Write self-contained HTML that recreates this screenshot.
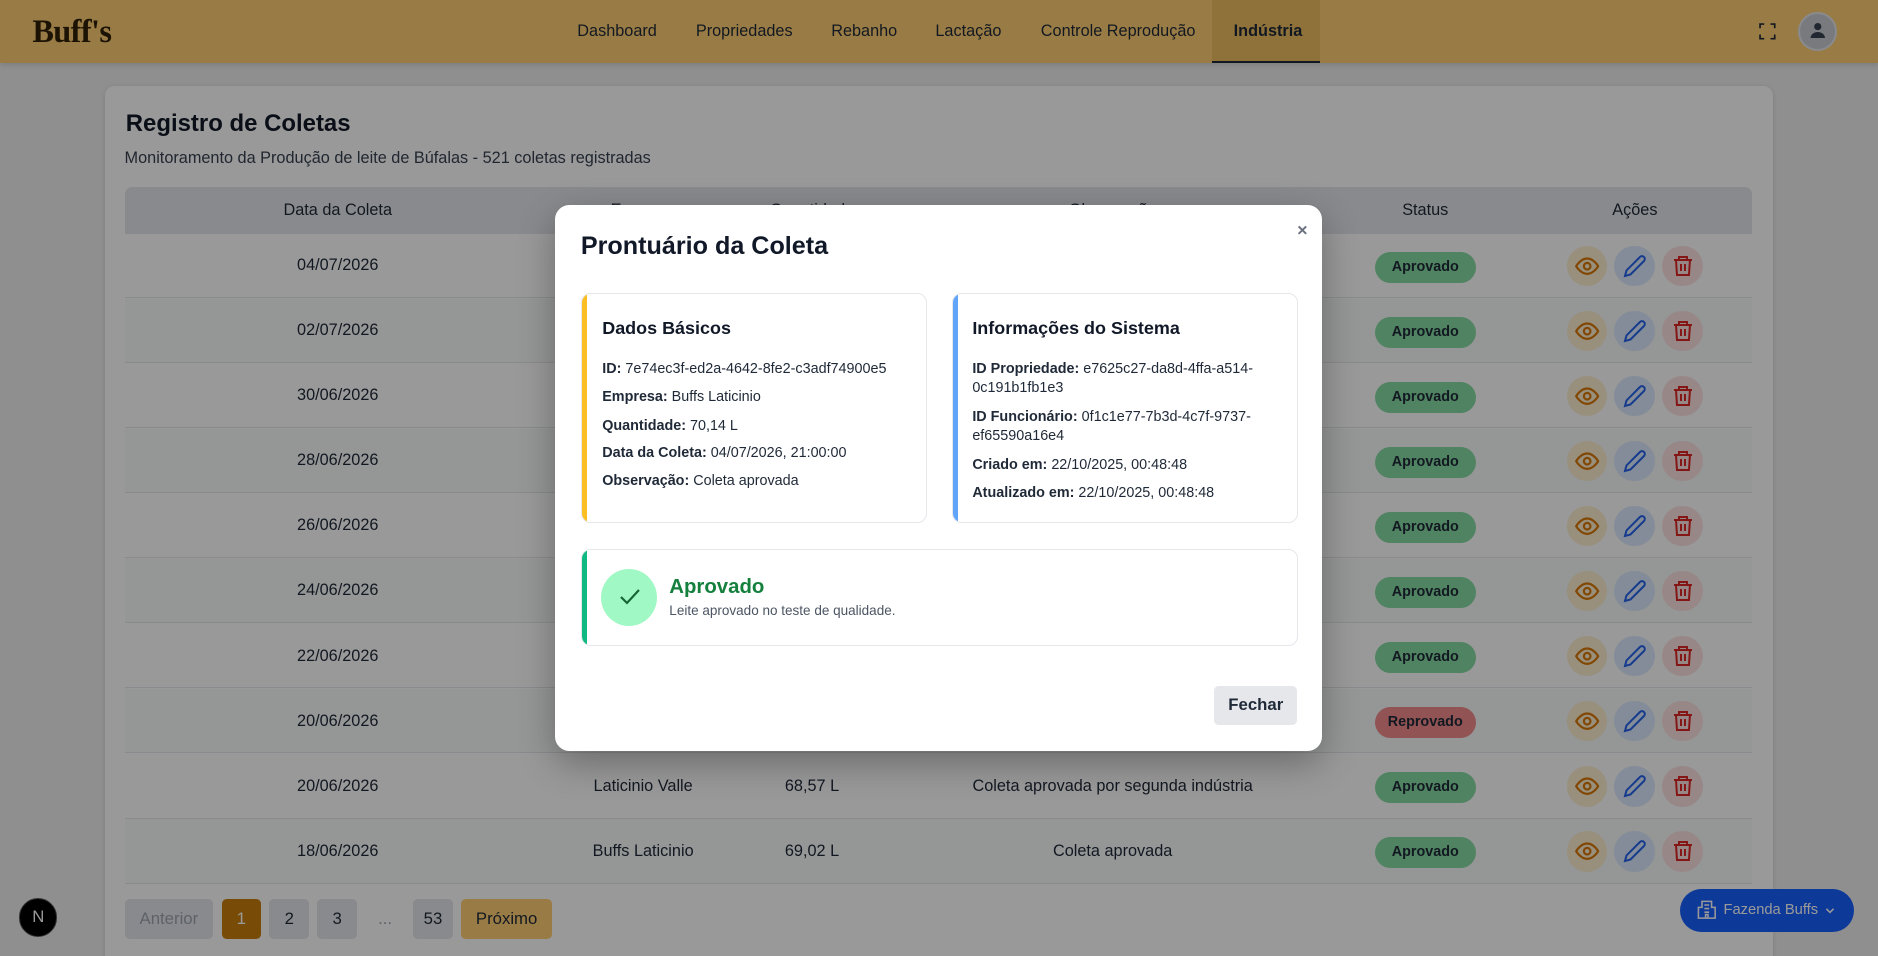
<!DOCTYPE html>
<html><head><meta charset="utf-8">
<style>
*{box-sizing:border-box;margin:0;padding:0}
html,body{width:1878px;height:956px;overflow:hidden;background:#eeeeef}
#w{zoom:1.19770;width:1568px;height:798px;position:relative;font-family:"Liberation Sans",sans-serif;color:#1f2937;overflow:hidden}
.a{position:absolute}
.hdr{left:0;top:0;width:1568px;height:53px;background:#ffcf73;box-shadow:0 2px 4px rgba(0,0,0,.12)}
.nav{font-size:13.6px;color:#1f2937;top:18px}
.card{left:88px;top:72px;width:1392px;height:760px;background:#fff;border-radius:8px;box-shadow:0 1px 4px rgba(0,0,0,.12)}
.th{left:104px;top:156px;width:1359px;height:39px;background:#e5e7eb;border-radius:6px 6px 0 0}
.c{position:absolute;transform:translateX(-50%);font-size:13.6px;white-space:nowrap;color:#1f2937}
.row{position:absolute;left:104px;width:1359px;height:54px;border-bottom:1px solid #e5e7eb}
.pill{position:absolute;left:1044px;width:84px;height:26px;border-radius:13px;background:#86dba2;font-size:12px;font-weight:bold;text-align:center;line-height:26px;color:#1f2937}
.pill.r{background:#f28b8b}
.ic{position:absolute;width:34px;height:34px;border-radius:50%;display:flex;align-items:center;justify-content:center}
.pg{position:absolute;top:751px;height:33px;border-radius:4px;background:#e5e7eb;font-size:14px;text-align:center;line-height:33px;color:#1f2937}
.ov{left:0;top:0;width:1568px;height:798px;background:rgba(0,0,0,.4)}
.modal{left:463px;top:171px;width:641px;height:456px;background:#fff;border-radius:12px;box-shadow:0 10px 30px rgba(0,0,0,.3)}
.box{position:absolute;border:1px solid #e5e7eb;border-radius:8px;background:#fff;overflow:hidden}
.box:before{content:"";position:absolute;left:0;top:0;bottom:0;width:4px}
.b1:before{background:#fbbf24}.b2:before{background:#60a5fa}.b3:before{background:#10b981}
.h{position:absolute;font-size:15px;font-weight:bold;color:#111827}
.ln{position:absolute;font-size:12px;color:#1f2937;line-height:16px}
.ln b{font-weight:bold}
</style></head><body><div id="w">
<div class="a hdr"></div>
<div class="a" style="left:27px;top:11px;font-family:'Liberation Serif',serif;font-weight:bold;font-size:27px;color:#2f2107;letter-spacing:-0.5px">Buff's</div>
<div class="a" style="left:1012px;top:0;width:90px;height:53px;background:#edbf62;border-bottom:2px solid #1f2937"></div>
<div class="a nav" style="left:482px">Dashboard</div>
<div class="a nav" style="left:581px">Propriedades</div>
<div class="a nav" style="left:694px">Rebanho</div>
<div class="a nav" style="left:781px">Lactação</div>
<div class="a nav" style="left:869px">Controle Reprodução</div>
<div class="a nav" style="left:1030px;font-weight:bold">Indústria</div>
<svg class="a" style="left:1469px;top:19px" width="14" height="14" viewBox="0 0 16 16" fill="none" stroke="#1f2937" stroke-width="1.6"><path d="M1 5V1h4M11 1h4v4M15 11v4h-4M5 15H1v-4"/></svg>
<div class="a" style="left:1501px;top:10px;width:33px;height:33px;border-radius:50%;background:#c9ccd2;border:2px solid #e5e7eb"></div>
<svg class="a" style="left:1509px;top:17px" width="18" height="18" viewBox="0 0 18 18" fill="#374151"><circle cx="9" cy="5.5" r="3"/><path d="M3 15a6 5 0 0 1 12 0z"/></svg>

<div class="a card"></div>
<div class="a" style="left:105px;top:92px;font-size:20px;font-weight:bold;color:#111827">Registro de Coletas</div>
<div class="a" style="left:104px;top:124px;font-size:13.6px;color:#374151">Monitoramento da Produção de leite de Búfalas - 521 coletas registradas</div>
<div class="a th"></div>
<div class="c" style="left:282px;top:168px">Data da Coleta</div>
<div class="c" style="left:537px;top:168px">Empresa</div>
<div class="c" style="left:678px;top:168px">Quantidade</div>
<div class="c" style="left:929px;top:168px">Observação</div>
<div class="c" style="left:1190px;top:168px">Status</div>
<div class="c" style="left:1365px;top:168px">Ações</div>

<div id="rows"></div>
<script>
var d=[["04/07/2026","Buffs Laticinio","70,14 L","Coleta aprovada",0],["02/07/2026","Buffs Laticinio","70,00 L","Coleta aprovada",0],["30/06/2026","Buffs Laticinio","69,80 L","Coleta aprovada",0],["28/06/2026","Buffs Laticinio","69,50 L","Coleta aprovada",0],["26/06/2026","Buffs Laticinio","69,40 L","Coleta aprovada",0],["24/06/2026","Buffs Laticinio","69,30 L","Coleta aprovada",0],["22/06/2026","Buffs Laticinio","69,20 L","Coleta aprovada",0],["20/06/2026","Buffs Laticinio","69,10 L","Coleta reprovada",1],["20/06/2026","Laticinio Valle","68,57 L","Coleta aprovada por segunda indústria",0],["18/06/2026","Buffs Laticinio","69,02 L","Coleta aprovada",0]];
var h="";
for(var i=0;i<10;i++){var t=195+i*54.3,r=d[i];
h+='<div class="row" style="top:'+t+'px;background:'+(i%2?'#f9fafb':'#fff')+'">'+
'<div class="c" style="left:178px;top:19px">'+r[0]+'</div>'+
'<div class="c" style="left:433px;top:19px">'+r[1]+'</div>'+
'<div class="c" style="left:574px;top:19px">'+r[2]+'</div>'+
'<div class="c" style="left:825px;top:19px">'+r[3]+'</div>'+
'<div class="pill'+(r[4]?' r':'')+'" style="top:15px">'+(r[4]?'Reprovado':'Aprovado')+'</div>'+
'<div class="ic" style="left:1204px;top:10px;background:#fdf0cf"><svg width="22" height="22" viewBox="0 0 24 24" fill="none" stroke="#d97706" stroke-width="2"><path d="M2 12s4-7 10-7 10 7 10 7-4 7-10 7S2 12 2 12z"/><circle cx="12" cy="12" r="3"/></svg></div>'+
'<div class="ic" style="left:1244px;top:10px;background:#dbeafe"><svg width="20" height="20" viewBox="0 0 24 24" fill="none" stroke="#2563eb" stroke-width="2"><path d="M17 3a2.8 2.8 0 0 1 4 4L7.5 20.5 2 22l1.5-5.5z"/></svg></div>'+
'<div class="ic" style="left:1284px;top:10px;background:#fee2e2"><svg width="20" height="20" viewBox="0 0 24 24" fill="none" stroke="#dc2626" stroke-width="2"><path d="M3 6h18M8 6V3h8v3M5 6l1 15h12l1-15M10 10v7M14 10v7"/></svg></div>'+
'</div>';}
document.getElementById("rows").innerHTML=h;
</script>
<div class="pg" style="left:104px;width:74px;color:#9ca3af">Anterior</div>
<div class="pg" style="left:185px;width:33px;background:#c97e0b;color:#fff">1</div>
<div class="pg" style="left:225px;width:33px">2</div>
<div class="pg" style="left:265px;width:33px">3</div>
<div class="pg" style="left:305px;width:33px;background:none;color:#9ca3af">...</div>
<div class="pg" style="left:345px;width:33px">53</div>
<div class="pg" style="left:385px;width:76px;background:#ffcf73">Próximo</div>
<div class="a" style="left:16px;top:750px;width:32px;height:32px;border-radius:50%;background:#000;border:1px solid #555;color:#fff;font-size:14px;text-align:center;line-height:30px">N</div>
<div class="a" style="left:1403px;top:742px;width:145px;height:36px;border-radius:18px;background:#1760ff;color:#fff;font-size:12.3px;line-height:36px;padding-left:36px">Fazenda Buffs</div>
<svg class="a" style="left:1416px;top:751px" width="18" height="18" viewBox="0 0 18 18" fill="none" stroke="#fff" stroke-width="1.3"><path d="M2 16V7h3V2h8v5h3v9zM7 5h4M7 8h4M7 11h4M8 16v-3h2v3"/></svg>
<svg class="a" style="left:1523px;top:755px" width="10" height="10" viewBox="0 0 10 10" fill="none" stroke="#fff" stroke-width="1.3"><path d="M2 4l3 3 3-3"/></svg>

<div class="a ov"></div>

<div class="a modal">
<div class="a" style="left:22px;top:23px;font-size:21px;font-weight:bold;color:#111827">Prontuário da Coleta</div>
<div class="a" style="left:620px;top:13px;font-size:15px;font-weight:bold;color:#6b7280">×</div>
<div class="box b1" style="left:22px;top:74px;width:289px;height:192px">
 <div class="h" style="left:17px;top:20px">Dados Básicos</div>
 <div class="ln" style="left:17px;top:55px"><b>ID:</b> 7e74ec3f-ed2a-4642-8fe2-c3adf74900e5</div>
 <div class="ln" style="left:17px;top:78px"><b>Empresa:</b> Buffs Laticinio</div>
 <div class="ln" style="left:17px;top:102px"><b>Quantidade:</b> 70,14 L</div>
 <div class="ln" style="left:17px;top:125px"><b>Data da Coleta:</b> 04/07/2026, 21:00:00</div>
 <div class="ln" style="left:17px;top:148px"><b>Observação:</b> Coleta aprovada</div>
</div>
<div class="box b2" style="left:332px;top:74px;width:289px;height:192px">
 <div class="h" style="left:16px;top:20px">Informações do Sistema</div>
 <div class="ln" style="left:16px;top:55px;width:245px"><b>ID Propriedade:</b> e7625c27-da8d-4ffa-a514-0c191b1fb1e3</div>
 <div class="ln" style="left:16px;top:95px;width:245px"><b>ID Funcionário:</b> 0f1c1e77-7b3d-4c7f-9737-ef65590a16e4</div>
 <div class="ln" style="left:16px;top:135px"><b>Criado em:</b> 22/10/2025, 00:48:48</div>
 <div class="ln" style="left:16px;top:158px"><b>Atualizado em:</b> 22/10/2025, 00:48:48</div>
</div>
<div class="box b3" style="left:22px;top:287px;width:599px;height:81px">
 <div class="a" style="left:16px;top:16px;width:47px;height:48px;border-radius:50%;background:#a0f8c4"></div>
 <svg class="a" style="left:30px;top:30px" width="20" height="20" viewBox="0 0 24 22" fill="none" stroke="#166534" stroke-width="2.2"><path d="M3 11l6 6L21 4"/></svg>
 <div class="a" style="left:73px;top:22px;font-size:17px;font-weight:bold;color:#15803d">Aprovado</div>
 <div class="a" style="left:73px;top:45px;font-size:11.3px;color:#4b5563">Leite aprovado no teste de qualidade.</div>
</div>
<div class="a" style="left:551px;top:402px;width:69px;height:32px;background:#e5e7eb;border-radius:4px;font-size:14px;font-weight:bold;text-align:center;line-height:32px;color:#1f2937">Fechar</div>
</div>
</div></body></html>
